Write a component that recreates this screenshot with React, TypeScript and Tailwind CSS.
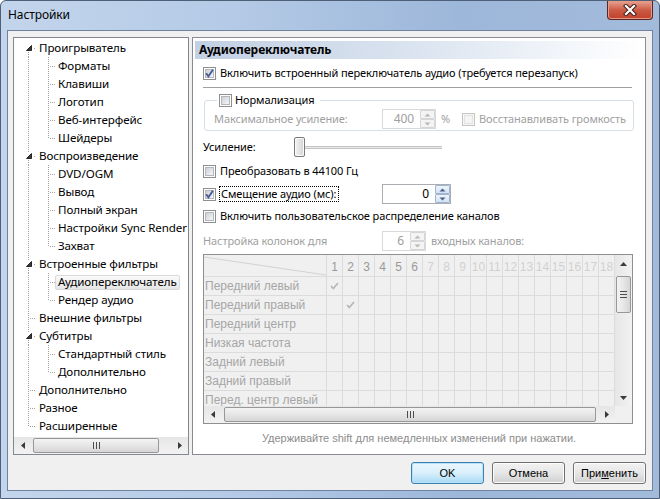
import React from "react";

const UI = "font-['Noto_Sans',sans-serif] text-[11px] tracking-[-0.1px]";
const OLD = "font-['Liberation_Sans',Arial,sans-serif] text-[11px] tracking-normal";

type TreeItem = {
  t: string;
  l: 0 | 1;
  exp?: boolean;
  last?: boolean;
  sel?: boolean;
};

const tree: TreeItem[] = [
  { t: "Проигрыватель", l: 0, exp: true },
  { t: "Форматы", l: 1 },
  { t: "Клавиши", l: 1 },
  { t: "Логотип", l: 1 },
  { t: "Веб-интерфейс", l: 1 },
  { t: "Шейдеры", l: 1, last: true },
  { t: "Воспроизведение", l: 0, exp: true },
  { t: "DVD/OGM", l: 1 },
  { t: "Вывод", l: 1 },
  { t: "Полный экран", l: 1 },
  { t: "Настройки Sync Render", l: 1 },
  { t: "Захват", l: 1, last: true },
  { t: "Встроенные фильтры", l: 0, exp: true },
  { t: "Аудиопереключатель", l: 1, sel: true },
  { t: "Рендер аудио", l: 1, last: true },
  { t: "Внешние фильтры", l: 0 },
  { t: "Субтитры", l: 0, exp: true },
  { t: "Стандартный стиль", l: 1 },
  { t: "Дополнительно", l: 1, last: true },
  { t: "Дополнительно", l: 0 },
  { t: "Разное", l: 0 },
  { t: "Расширенные", l: 0 },
];

const channels = [
  "Передний левый",
  "Передний правый",
  "Передний центр",
  "Низкая частота",
  "Задний левый",
  "Задний правый",
  "Перед. центр левый",
];

const DOT = "1 1";
const LINE = "#a0a0a0";

function TreeRow({ item, index }: { item: TreeItem; index: number }) {
  const first = index === 0;
  const lastRoot = index === tree.length - 1;
  const w = item.l === 0 ? 22 : 41;
  return (
    <div className="flex h-[18px] items-center">
      <svg width={w} height={18} className="shrink-0" shapeRendering="crispEdges">
        {/* root vertical */}
        {item.l === 1 && <line x1={14.5} y1={0} x2={14.5} y2={18} stroke={LINE} strokeDasharray={DOT} />}
        {item.l === 0 && item.exp && !first && (
          <line x1={14.5} y1={0} x2={14.5} y2={6} stroke={LINE} strokeDasharray={DOT} />
        )}
        {item.l === 0 && item.exp && <line x1={14.5} y1={13} x2={14.5} y2={18} stroke={LINE} strokeDasharray={DOT} />}
        {item.l === 0 && !item.exp && (
          <line x1={14.5} y1={0} x2={14.5} y2={lastRoot ? 10 : 18} stroke={LINE} strokeDasharray={DOT} />
        )}
        {item.l === 0 && !item.exp && <line x1={16} y1={9.5} x2={22} y2={9.5} stroke={LINE} strokeDasharray={DOT} />}
        {item.l === 0 && item.exp && (
          <>
            <path d="M17.5 6.5 L17.5 11.5 L12.5 11.5 Z" fill="#3a3a3a" stroke="#262626" strokeWidth={1} shapeRendering="auto" />
            <line x1={20} y1={9.5} x2={22} y2={9.5} stroke={LINE} strokeDasharray={DOT} />
          </>
        )}
        {item.l === 1 && (
          <>
            <line x1={34.5} y1={0} x2={34.5} y2={item.last ? 10 : 18} stroke={LINE} strokeDasharray={DOT} />
            <line x1={36} y1={9.5} x2={41} y2={9.5} stroke={LINE} strokeDasharray={DOT} />
          </>
        )}
      </svg>
      <span
        className={`flex h-[15px] items-center whitespace-nowrap rounded-[2px] border px-[2px] text-[11.6px] text-black ${
          item.sel ? "border-[#d9d9d9] bg-gradient-to-b from-[#fafafa] to-[#e6e6e6]" : "border-transparent"
        }`}
      >
        {item.t}
      </span>
    </div>
  );
}

function CheckBox({ checked = false, disabled = false }: { checked?: boolean; disabled?: boolean }) {
  return (
    <span
      className={`relative flex h-[13px] w-[13px] shrink-0 items-center justify-center border ${
        disabled ? "border-[#c4c4c4] bg-[#f7f7f7]" : "border-[#8f8f8f] bg-white"
      }`}
    >
      <span
        className={`h-[9px] w-[9px] border ${
          disabled ? "border-[#e2e2e2] bg-[#f4f4f4]" : "border-[#b4b8bd] bg-gradient-to-br from-[#cdd1d7] to-[#f7f7f7]"
        }`}
      />
      {checked && (
        <svg className="absolute left-0 top-0" width="11" height="11" viewBox="0 0 11 11">
          <path d="M2.2 5.3 L4.4 8.3 L8.9 1.8" fill="none" stroke="#4a5c97" strokeWidth="1.9" />
        </svg>
      )}
    </span>
  );
}

function SpinBtn({ up, disabled }: { up?: boolean; disabled?: boolean }) {
  return (
    <span
      className={`flex h-[9px] w-[15px] items-center justify-center rounded-[1px] border ${
        disabled
          ? "border-[#d6d6d6] bg-[#f4f4f4]"
          : "border-[#9fb4cf] bg-gradient-to-b from-[#eef4fb] to-[#d3e2f3]"
      }`}
    >
      <svg width="7" height="4" viewBox="0 0 7 4">
        <path d={up ? "M0.5 3.5 L3.5 0.5 L6.5 3.5 Z" : "M0.5 0.5 L3.5 3.5 L6.5 0.5 Z"} fill={disabled ? "#b8b8b8" : "#4d6185"} />
      </svg>
    </span>
  );
}

function Spin({ value, className, disabled }: { value: string; className: string; disabled?: boolean }) {
  return (
    <div className={`flex h-[20px] shrink-0 border bg-white ${className} ${disabled ? "border-[#d9d9d9]" : "border-[#abadb3]"}`}>
      <div className={`flex flex-1 items-center justify-end pr-[6px] text-[12px] ${disabled ? "text-[#a0a0a0]" : "text-black"}`}>{value}</div>
      <div className="flex flex-col">
        <SpinBtn up disabled={disabled} />
        <SpinBtn disabled={disabled} />
      </div>
    </div>
  );
}

function Arrow({ dir }: { dir: "l" | "r" | "u" | "d" }) {
  const d = {
    l: "M4 0 L0 3.5 L4 7 Z",
    r: "M0 0 L4 3.5 L0 7 Z",
    u: "M0 4 L3.5 0 L7 4 Z",
    d: "M0 0 L3.5 4 L7 0 Z",
  }[dir];
  const hz = dir === "l" || dir === "r";
  return (
    <span className="flex h-[17px] w-[17px] shrink-0 items-center justify-center">
      <svg width={hz ? 4 : 7} height={hz ? 7 : 4} viewBox={hz ? "0 0 4 7" : "0 0 7 4"}>
        <path d={d} fill="#3a3a3a" />
      </svg>
    </span>
  );
}

function HScroll({ pad, thumb }: { pad: string; thumb: string }) {
  return (
    <div className="flex h-[17px] shrink-0 bg-gradient-to-b from-[#e6e6e6] to-[#f2f2f2]">
      <Arrow dir="l" />
      <div className={`flex flex-1 items-center ${pad}`}>
        <div
          className={`flex h-[15px] items-center justify-center rounded-[2px] border border-[#979797] bg-gradient-to-b from-[#f3f3f3] via-[#e6e6e6] to-[#d6d6d6] ${thumb}`}
        >
          <svg width="7" height="7" shapeRendering="crispEdges">
            <path d="M0.5 0 V7 M3.5 0 V7 M6.5 0 V7" stroke="#4d4d4d" />
          </svg>
        </div>
      </div>
      <Arrow dir="r" />
    </div>
  );
}

function VScroll() {
  return (
    <div className="flex w-[17px] shrink-0 flex-col bg-gradient-to-r from-[#e6e6e6] to-[#f2f2f2]">
      <Arrow dir="u" />
      <div className="flex flex-1 flex-col items-center pt-[4px]">
        <div className="flex h-[37px] w-[15px] items-center justify-center rounded-[2px] border border-[#979797] bg-gradient-to-r from-[#f3f3f3] via-[#e6e6e6] to-[#d6d6d6]">
          <svg width="7" height="7" shapeRendering="crispEdges">
            <path d="M0 0.5 H7 M0 3.5 H7 M0 6.5 H7" stroke="#4d4d4d" />
          </svg>
        </div>
      </div>
      <Arrow dir="d" />
    </div>
  );
}

function SmallCheck() {
  return (
    <svg width="9" height="8" viewBox="0 0 9 8">
      <path d="M1 4 L3.3 6.5 L8 1" fill="none" stroke="#b5b5b5" strokeWidth="1.6" />
    </svg>
  );
}

function ChannelGrid() {
  const cols = Array.from({ length: 18 }, (_, i) => i + 1);
  return (
    <div className={`mt-[3px] flex h-[170px] w-[430px] flex-col border border-[#8f8f8f] bg-[#f0f0f0] ${OLD}`}>
      <div className="flex min-h-0 flex-1">
        <div className="flex min-w-0 flex-1 flex-col overflow-hidden">
          <div className="flex h-[22px] shrink-0 border-b border-[#dcdcdc]">
            <div className="w-[123px] shrink-0 border-r border-[#dcdcdc]">
              <svg width="122" height="21">
                <line x1="0" y1="2" x2="122" y2="20" stroke="#d2d2d2" />
              </svg>
            </div>
            {cols.map((c) => (
              <div
                key={c}
                className={`flex w-[16px] shrink-0 items-center justify-center border-r border-[#dcdcdc] pt-[2px] text-[12px] ${
                  c <= 6 ? "text-[#9a9a9a]" : "text-[#d0d0d0]"
                }`}
              >
                {c}
              </div>
            ))}
          </div>
          {channels.map((ch, r) => (
            <div key={ch} className="flex h-[19px] shrink-0 border-b border-[#dcdcdc]">
              <div className="flex w-[123px] shrink-0 items-center whitespace-nowrap border-r border-[#dcdcdc] pl-[1px] text-[12px] text-[#a6a6a6]">
                {ch}
              </div>
              {cols.map((c) => (
                <div key={c} className="flex w-[16px] shrink-0 items-center justify-center border-r border-[#dcdcdc]">
                  {c === r + 1 && r < 2 && <SmallCheck />}
                </div>
              ))}
            </div>
          ))}
        </div>
        <VScroll />
      </div>
      <div className="flex">
        <div className="flex-1">
          <HScroll pad="pl-[3px]" thumb="w-[372px]" />
        </div>
        <div className="h-[17px] w-[17px] bg-[#f0f0f0]" />
      </div>
    </div>
  );
}

function Button({ children, primary }: { children: React.ReactNode; primary?: boolean }) {
  return (
    <button
      className={`flex h-[22px] w-[73px] items-center justify-center rounded-[3px] border ${OLD} text-black ${
        primary
          ? "border-[#3c7fb1] bg-gradient-to-b from-[#eaf6fd] via-[#d9f0fc] to-[#a7d9f5] shadow-[inset_0_0_0_1px_#b8e2f8]"
          : "border-[#707070] bg-gradient-to-b from-[#f2f2f2] via-[#e6e6e6] to-[#d0d0d0] shadow-[inset_0_0_0_1px_#fcfcfc]"
      }`}
    >
      {children}
    </button>
  );
}

export default function App() {
  return (
    <div className={`flex h-[499px] w-[660px] flex-col overflow-hidden rounded-t-[6px] border border-[#4e5f78] bg-[linear-gradient(to_right,#c3d5ec,#b4cae6_35%,#9db7da_70%,#a3bbdb)] ${UI}`}>
      {/* title bar */}
      <div className="flex h-[29px] shrink-0 items-start justify-between">
        <div className="pl-[7px] pt-[5px] text-[12px] text-black">Настройки</div>
        <div className="mr-[6px] flex h-[19px] w-[46px] items-center justify-center rounded-b-[4px] border border-t-0 border-[#5a2520] bg-gradient-to-b from-[#e6a393] via-[#cc5b45] to-[#c0402a] shadow-[inset_0_0_0_1px_#e79a87]">
          <svg width="14" height="12" viewBox="0 0 14 12">
            <path d="M3 2 L11 10 M11 2 L3 10" stroke="#40201a" strokeWidth="4.2" strokeLinecap="square" />
            <path d="M3 2 L11 10 M11 2 L3 10" stroke="#ffffff" strokeWidth="2.2" strokeLinecap="square" />
          </svg>
        </div>
      </div>

      {/* client area */}
      <div className="mx-[6px] mb-[7px] flex flex-1 flex-col border border-[#6f83a0] bg-[#f0f0f0]">
        <div className="flex gap-[3px] pl-[5px] pt-[6px]">
          {/* tree */}
          <div className="flex h-[418px] w-[176px] shrink-0 flex-col border border-[#828790] bg-white">
            <div className="min-h-0 flex-1 overflow-hidden pt-px">
              {tree.map((it, i) => (
                <TreeRow key={i} item={it} index={i} />
              ))}
            </div>
            <HScroll pad="pl-[2px]" thumb="w-[126px]" />
          </div>

          {/* page */}
          <div className="flex h-[418px] w-[454px] shrink-0 flex-col border border-[#898c95] bg-white text-[12px]">
            <div className="mx-[2px] mt-[3px] flex h-[18px] items-center bg-gradient-to-r from-[#c2d0e4] via-[#dbe4f0] to-white pl-[4px] text-[12px] font-bold text-black">
              Аудиопереключатель
            </div>

            <div className="flex flex-col pl-[10px] pr-[11px] text-[11px]">
              <div className="mt-[5px] flex h-[18px] items-center gap-[4px] whitespace-nowrap">
                <CheckBox checked />
                <span>Включить встроенный переключатель аудио (требуется перезапуск)</span>
              </div>

              <div className="mr-[2px] mt-[5px] h-px bg-[#a0a0a0]" />

              <fieldset className="ml-px mt-[5px] rounded-[3px] border border-[#d5dfe5] p-0">
                <legend className="ml-[12px] flex h-[14px] items-center gap-[3px] pl-[2px] pr-[6px]">
                  <CheckBox />
                  <span>Нормализация</span>
                </legend>
                <div className="mb-px mt-[2px] flex h-[20px] items-center whitespace-nowrap pl-[9px] text-[#a0a0a0]">
                  <span className="w-[168px] shrink-0">Максимальное усиление:</span>
                  <Spin value="400" className="w-[54px]" disabled />
                  <span className="ml-[5px]">%</span>
                  <span className="ml-[12px] flex items-center gap-[4px]">
                    <CheckBox disabled />
                    <span>Восстанавливать громкость</span>
                  </span>
                </div>
              </fieldset>

              <div className="mt-[6px] flex h-[20px] items-center">
                <span className="w-[91px] shrink-0">Усиление:</span>
                <div className="relative flex h-[20px] w-[148px] items-center">
                  <div className="h-[3px] w-full border-y border-[#c5c5c5] bg-[#e7eaea]" />
                  <div className="absolute left-0 top-0 h-[20px] w-[11px] rounded-[2px] border border-[#7a7a7a] bg-gradient-to-r from-[#f4f4f4] to-[#d4d4d4] shadow-[inset_0_0_0_1px_#fbfbfb]" />
                </div>
              </div>

              <div className="mt-[5px] flex h-[18px] items-center gap-[4px]">
                <CheckBox />
                <span>Преобразовать в 44100 Гц</span>
              </div>

              <div className="mt-[4px] flex h-[20px] items-center">
                <div className="flex w-[179px] shrink-0 items-center gap-[3px]">
                  <CheckBox checked />
                  <span className="whitespace-nowrap border border-dotted border-black pl-px pr-[2px] leading-[14px]">Смещение аудио (мс):</span>
                </div>
                <Spin value="0" className="w-[69px]" />
              </div>

              <div className="mt-[3px] flex h-[18px] items-center gap-[4px] whitespace-nowrap">
                <CheckBox />
                <span>Включить пользовательское распределение каналов</span>
              </div>

              <div className="mt-[6px] flex h-[20px] items-center whitespace-nowrap text-[#a0a0a0]">
                <span className="w-[179px] shrink-0">Настройка колонок для</span>
                <Spin value="6" className="w-[44px]" disabled />
                <span className="ml-[5px]">входных каналов:</span>
              </div>

              <ChannelGrid />
            </div>

            <div className={`mt-[6px] text-center text-[#8c8c8c] ${OLD}`}>
              Удерживайте shift для немедленных изменений при нажатии.
            </div>
          </div>
        </div>

        <div className="flex justify-end gap-[8px] pr-[6px] pt-[7px]">
          <Button primary>OK</Button>
          <Button>Отмена</Button>
          <Button>
            При<u>м</u>енить
          </Button>
        </div>
      </div>
    </div>
  );
}
